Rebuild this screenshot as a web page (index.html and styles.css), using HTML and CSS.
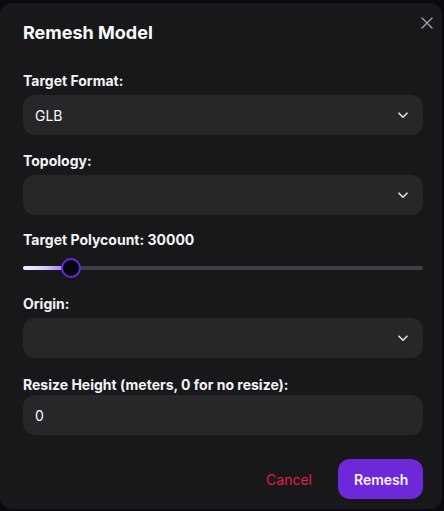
FILE: index.html
```html
<!DOCTYPE html>
<html lang="en">
<head>
<meta charset="utf-8">
<title>Remesh Model</title>
<link rel="stylesheet" href="styles.css">
</head>
<body>
<div class="dialog">
  <button class="close" aria-label="Close">
    <svg width="12" height="12" viewBox="0 0 12 12"><path d="M1 1L11 11M11 1L1 11" stroke="#a1a1aa" stroke-width="1.4" stroke-linecap="round"/></svg>
  </button>
  <h2 class="title">Remesh Model</h2>

  <div class="field first">
    <div class="label">Target Format:</div>
    <div class="select"><span>GLB</span>
      <svg class="chev" width="16" height="16" viewBox="0 0 16 16"><path d="M4 6.2l4 4 4-4" fill="none" stroke="#e4e4e7" stroke-width="1.6" stroke-linecap="round" stroke-linejoin="round"/></svg>
    </div>
  </div>

  <div class="field">
    <div class="label">Topology:</div>
    <div class="select"><span></span>
      <svg class="chev" width="16" height="16" viewBox="0 0 16 16"><path d="M4 6.2l4 4 4-4" fill="none" stroke="#e4e4e7" stroke-width="1.6" stroke-linecap="round" stroke-linejoin="round"/></svg>
    </div>
  </div>

  <div class="field slider-field">
    <div class="label">Target Polycount: 30000</div>
    <div class="slider">
      <div class="track"><div class="fill" style="width:12%"></div></div>
      <div class="thumb" style="left:12%"></div>
    </div>
  </div>

  <div class="field">
    <div class="label">Origin:</div>
    <div class="select"><span></span>
      <svg class="chev" width="16" height="16" viewBox="0 0 16 16"><path d="M4 6.2l4 4 4-4" fill="none" stroke="#e4e4e7" stroke-width="1.6" stroke-linecap="round" stroke-linejoin="round"/></svg>
    </div>
  </div>

  <div class="field resize-field">
    <div class="label tight">Resize Height (meters, 0 for no resize):</div>
    <div class="select input"><span>0</span></div>
  </div>

  <div class="footer">
    <button class="btn cancel">Cancel</button>
    <button class="btn primary">Remesh</button>
  </div>
</div>
</body>
</html>
```

FILE: styles.css
```css
html, body {
  margin: 0;
  padding: 0;
  background: #0a0a10;
  font-family: Inter, "Noto Sans", "Liberation Sans", sans-serif;
  color: #fafafa;
}

.dialog {
  position: relative;
  box-sizing: border-box;
  margin-top: 3px;
  width: 442px;
  height: 506px;
  background: #18181b;
  border-radius: 12px;
  padding: 16px 19px 0 23px;
}

.close {
  position: absolute;
  top: 14px;
  right: 9px;
  width: 12px;
  height: 12px;
  padding: 0;
  border: 0;
  background: none;
  display: flex;
}

.title {
  margin: 0 0 24px;
  font-size: 18px;
  line-height: 28px;
  font-weight: 700;
  color: #fafafa;
}

.field { margin-top: 16px; }
.field.first { margin-top: 0; }
.resize-field { margin-top: 17px; }

.label {
  font-size: 14px;
  line-height: 20px;
  font-weight: 700;
  color: #f4f4f5;
  margin-bottom: 4px;
}
.label.tight { margin-bottom: 0; }

.select {
  height: 40px;
  box-sizing: border-box;
  background: #27272a;
  border-radius: 12px;
  padding: 0 12px;
  display: flex;
  align-items: center;
  justify-content: space-between;
  font-size: 14px;
  color: #fafafa;
}

.slider {
  position: relative;
  height: 20px;
  margin-top: 8px;
  display: flex;
  align-items: center;
}
.slider-field { margin-top: 15px; }

.track {
  width: 100%;
  height: 4px;
  border-radius: 2px;
  background: #3f3f46;
  overflow: hidden;
}
.fill {
  height: 100%;
  background: linear-gradient(90deg, #f5f3ff 0%, #d8ccfb 45%, #8b5cf6 100%);
}
.thumb {
  position: absolute;
  top: 0;
  width: 20px;
  height: 20px;
  box-sizing: border-box;
  margin-left: -10px;
  border-radius: 50%;
  border: 2px solid #6d28d9;
  background: #050510;
}

.footer {
  display: flex;
  justify-content: flex-end;
  align-items: center;
  gap: 10px;
  margin-top: 24px;
}

.btn {
  height: 40px;
  border: 0;
  border-radius: 12px;
  font-family: inherit;
  font-size: 14px;
  padding: 0 16px;
  background: none;
}
.cancel {
  color: #e11d48;
  font-weight: 400;
}
.primary {
  background: #6d28d9;
  color: #f5f3ff;
  font-weight: 600;
  width: 85px;
}
```
